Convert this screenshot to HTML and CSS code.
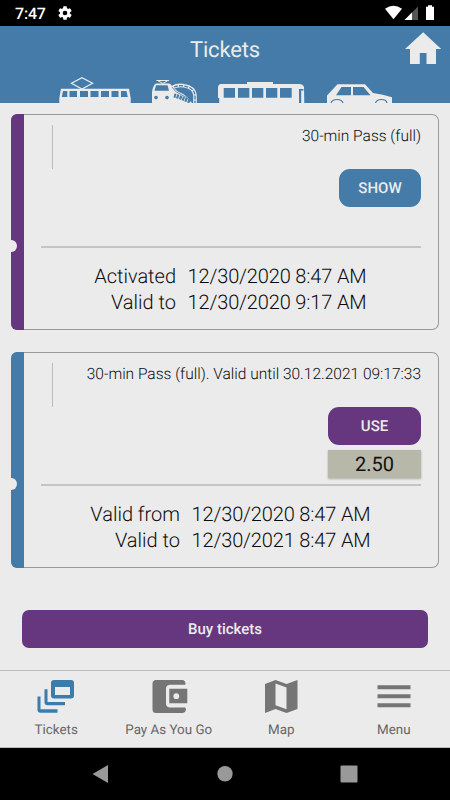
FILE: index.html
```html
<!DOCTYPE html>
<html lang="en">
<head>
<meta charset="utf-8">
<title>Tickets</title>
<link rel="stylesheet" href="styles.css">
</head>
<body>
<div class="screen">
  <div class="status">
    <span class="clock">7:47</span>
    <svg class="gear" viewBox="2 2 20 20"><path fill="#fff" d="M19.14 12.94c.04-.3.06-.61.06-.94s-.02-.64-.07-.94l2.03-1.58a.49.49 0 0 0 .12-.61l-1.92-3.32a.49.49 0 0 0-.59-.22l-2.39.96a7 7 0 0 0-1.62-.94l-.36-2.54a.48.48 0 0 0-.48-.41h-3.84a.47.47 0 0 0-.47.41l-.36 2.54c-.59.24-1.13.57-1.62.94l-2.39-.96a.48.48 0 0 0-.59.22L2.74 8.87a.47.47 0 0 0 .12.61l2.03 1.58c-.05.3-.09.63-.09.94s.02.64.07.94l-2.03 1.58a.49.49 0 0 0-.12.61l1.92 3.32c.12.22.37.29.59.22l2.39-.96c.5.38 1.03.7 1.62.94l.36 2.54c.05.24.24.41.48.41h3.84c.24 0 .44-.17.47-.41l.36-2.54a6.8 6.8 0 0 0 1.62-.94l2.39.96c.22.08.47 0 .59-.22l1.92-3.32a.47.47 0 0 0-.12-.61zM12 15.3a3.3 3.3 0 1 1 0-6.6 3.3 3.3 0 0 1 0 6.6"/></svg>
    <svg class="signals" viewBox="384 4 52 18">
      <path fill="#fff" d="M385 8.800q8.500-6 17 0L393.500 19.200z"/>
      <path fill="#555" d="M418 6.500V20h-13.500z"/>
      <path fill="#fff" d="M412 12.500V20h-7.500z"/>
      <path fill="#fff" d="M426 6.700h2V5.300h4v1.400h2V20h-8z"/>
    </svg>
  </div>

  <header class="header">
    <div class="title-row">
      <h1 class="title">Tickets</h1>
      <svg class="home" viewBox="405 32 37 32"><path fill="#ebebeb" d="M423.200 32.300 441.200 49H436v15h-9.500V53h-6.700v11H410V49h-5z"/></svg>
    </div>
    <svg class="vehicles" viewBox="0 75 450 28">
      <path fill="none" stroke="#ebebeb" stroke-width="1.300" d="m82 89-10.500-5.700L82 77.700l10.500 5.600z"/>
      <path fill="#ebebeb" d="M61 88.700h68l1.700 9.300v5H59.300v-5z"/>
      <path fill="#447ba8" d="M63 91h4.300v6h-5.500zM69.500 91h7.500v6h-7.500zM80 91h8v6h-8zM90.500 91h8v6h-8zM101 91h8v6h-8zM111.500 91h7v6h-7zM121 91h5.500l1.300 6H121z"/>
      <path fill="none" stroke="#ebebeb" d="M156.500 80.500h12.500M158 80.800l5 2.700 4.500-2.700"/>
      <path fill="#ebebeb" d="M156 83.500h13q2 0 3 3l6 5q9 3.500 14 11.500h-40V92q1-7 4-8.500"/>
      <path fill="none" stroke="#ebebeb" stroke-width="3.600" d="M172 87.500q6-3 12-1.800 10 1.500 11 9.300V103"/>
      <path fill="none" stroke="#447ba8" stroke-width="1.300" stroke-dasharray="4 1.200" d="M174 87q5-2 10-1 10 1.500 11 9.300V103"/>
      <path fill="#447ba8" d="M156 85.200h11.500l1.500 5.500h-14.500z"/>
      <circle cx="156" cy="97.600" r="1.800" fill="#447ba8"/><circle cx="167" cy="97.600" r="1.800" fill="#447ba8"/>
      <path fill="none" stroke="#447ba8" stroke-width="4" stroke-dasharray="2.200 .8" d="M174 95.500q6 1.500 16 6"/>
      <path fill="none" stroke="#447ba8" stroke-width=".8" d="M172 87q2.500 5 9 7.500 6 2.500 10 7"/>
      <path fill="#ebebeb" d="M221 84h26v-2h26v2h26q4 0 5 3l.3 16H218V88q0-4 3-4"/>
      <path fill="#447ba8" d="M223.700 88H235v9.700h-11.300zM238 88h11.300v9.700H238zM252 88h11.300v9.700H252zM266 88h11.300v9.700H266zM280 88h11.700v9.700H280zM299 89h4.500v1.400h-2.300V103H299zM217.500 98h1.700v5h-1.700z"/>
      <path fill="#ebebeb" d="M337.500 84.200H365l8 8.800q10 1.500 19 4.300v5.700h-65v-7.500z"/>
      <path fill="#447ba8" d="M341.500 87H351v8.300h-15zM353 87h10.500l7 8.300H353z"/>
      <path fill="none" stroke="#447ba8" stroke-width="1.200" d="M331 103q1-3.500 6-3.500t6 3.500M375.500 103q1-3.500 6-3.500t5.500 3.500"/>
    </svg>
  </header>

  <main class="main">
    <article class="ticket">
      <div class="stub active"></div><i class="notch"></i>
      <div class="body">
        <div class="name">30-min Pass (full)</div>
        <div class="actions"><button class="btn show">SHOW</button></div>
        <div class="dates">
          <span>Activated</span><span>12/30/2020 8:47 AM</span>
          <span>Valid to</span><span>12/30/2020 9:17 AM</span>
        </div>
      </div>
    </article>
    <article class="ticket">
      <div class="stub"></div><i class="notch"></i>
      <div class="body">
        <div class="name">30-min Pass (full). Valid until 30.12.2021 09:17:33</div>
        <div class="actions"><button class="btn use">USE</button><div class="price">2.50</div></div>
        <div class="dates wide">
          <span>Valid from</span><span>12/30/2020 8:47 AM</span>
          <span>Valid to</span><span>12/30/2021 8:47 AM</span>
        </div>
      </div>
    </article>
    <button class="buy">Buy tickets</button>
  </main>

  <nav class="tabs">
    <a class="tab"><svg viewBox="0 0 38 36"><path fill="#3a7dac" fill-rule="evenodd" d="M17 1h17a3 3 0 0 1 3 3v12.500a3 3 0 0 1-3 3H17a3 3 0 0 1-3-3V4a3 3 0 0 1 3-3m1 7v8h15V8zM7.500 10.300h3V23H28v3.300H10.500a3 3 0 0 1-3-3zM.5 17.500h3v12.800h17v3.400H3.500a3 3 0 0 1-3-3z"/></svg><span>Tickets</span></a>
    <a class="tab"><svg viewBox="0 0 38 36"><path fill="#757575" d="M6 1h26a3.500 3.500 0 0 1 3.300 4.700H19.500A4 4 0 0 0 16 9.500v15a4 4 0 0 0 3.500 4h15.800A3.500 3.500 0 0 1 32 34H6a3.500 3.500 0 0 1-3.500-3.500v-26A3.500 3.500 0 0 1 6 1"/><path fill="#757575" fill-rule="evenodd" d="M19.300 9.800h18v14.500h-18zm7 4.500a2.900 2.900 0 1 0 0 5.800 2.900 2.900 0 0 0 0-5.800"/></svg><span>Pay As You Go</span></a>
    <a class="tab"><svg viewBox="0 0 38 36"><path fill="#757575" fill-rule="evenodd" d="M3 5 13.500 1l11 4L35.500 1v29l-11 4-11-4L3 34zm10.500-.5v21.800l11 4V8.500z"/></svg><span>Map</span></a>
    <a class="tab"><svg viewBox="0 0 38 36"><path fill="#757575" d="M2.500 6.200h33v4h-33zM2.500 15.300h33v3.900h-33zM2.500 24.200h33v4h-33z"/></svg><span>Menu</span></a>
  </nav>

  <div class="system">
    <svg viewBox="0 0 20 20"><path fill="#999" d="M1.500 10 17 1v18z"/></svg>
    <svg viewBox="0 0 20 20"><circle cx="10" cy="9.700" r="7.700" fill="#999"/></svg>
    <svg viewBox="0 0 20 20"><rect x="1.500" y="1.500" width="17" height="17" rx="1" fill="#999"/></svg>
  </div>
</div>
</body>
</html>
```
FILE: styles.css
```css
* { box-sizing: border-box; }
body { margin: 0; font-family: Roboto, sans-serif; background: #ebebeb; color: #0c0c0e; text-rendering: geometricPrecision; }
button { border: 0; padding: 0; font: 500 15px/1 Roboto, sans-serif; color: #ebebeb; text-rendering: geometricPrecision; }
svg { display: block; flex: none; }
.screen { width: 450px; height: 800px; display: flex; flex-direction: column; overflow: hidden; }

.status { height: 26px; background: #000; color: #fff; display: flex; align-items: center; padding: 0 14px 0 15px; }
.clock { font-size: 16px; font-weight: 500; line-height: 26px; width: 43px; padding-top: 2px; letter-spacing: -.2px; }
.gear { width: 14px; height: 14px; }
.signals { width: 52px; height: 18px; margin-left: auto; }

.header { height: 77px; background: #447ba8; display: flex; flex-direction: column; }
.title-row { height: 49px; display: grid; grid-template-columns: 1fr auto 1fr; padding-right: 8px; padding-left: 8px; }
.title { grid-column: 2; margin: 0; color: #ebebeb; font-size: 22px; font-weight: 400; line-height: 49px; letter-spacing: -.15px; }
.home { width: 37px; height: 32px; justify-self: end; margin-top: 6px; }
.vehicles { width: 450px; height: 28px; }

.main { height: 567px; padding: 11px 11px 0; display: flex; flex-direction: column; }
.ticket { position: relative; display: flex; height: 216px; margin-bottom: 22px; border: 1px solid #999; border-left: 0; border-radius: 7px; }
.stub { width: 13px; margin: -1px 0; background: #447ba8; border-radius: 6px 0 0 6px; }
.stub.active { background: #66377f; }
.notch { position: absolute; left: -5px; top: 125px; width: 11px; height: 12px; border-radius: 50%; background: #ebebeb; }
.body { flex: 1; padding: 10px 17px 0; display: flex; flex-direction: column; }
.name { height: 44px; margin-left: 11px; border-left: 1px solid #bbb; text-align: right; font-size: 15.500px; font-weight: 300; line-height: 22px; white-space: nowrap; }
.actions { height: 79px; border-bottom: 2px solid #c4c4c4; display: flex; flex-direction: column; align-items: flex-end; }
.btn { height: 38px; border-radius: 11px; }
.show { width: 82px; background: #447ba8; }
.use { width: 93px; background: #66377f; }
.price { width: 93px; height: 28px; margin-top: 5px; background: #b7b7aa; box-shadow: 0 1px 2px #aaa; color: #111; text-align: center; font-size: 20px; line-height: 28px; }
.dates { display: grid; grid-template-columns: 135px auto; column-gap: 12px; justify-content: start; padding-top: 15px; font-size: 20px; font-weight: 300; line-height: 26px; white-space: nowrap; }
.dates.wide { grid-template-columns: 139px auto; }
.dates span:nth-child(odd) { text-align: right; }
.dates span:nth-child(even) { letter-spacing: -.15px; margin-left: -.5px; }
.buy { width: 406px; height: 38px; margin: 20px 0 0 11px; flex: none; border-radius: 7px; background: #66377f; }

.tabs { height: 78px; border-top: 1px solid #bdbdbd; border-bottom: 1px solid #bdbdbd; display: grid; grid-template-columns: repeat(4, 1fr); }
.tab { display: flex; flex-direction: column; align-items: center; padding-top: 8px; color: #666; }
.tab svg { width: 38px; height: 36px; }
.tab span { font-size: 13.400px; line-height: 18px; margin-top: 7px; }
.system { height: 52px; background: #000; display: flex; align-items: center; justify-content: center; gap: 104px; }
.system svg { width: 20px; height: 20px; }
```
